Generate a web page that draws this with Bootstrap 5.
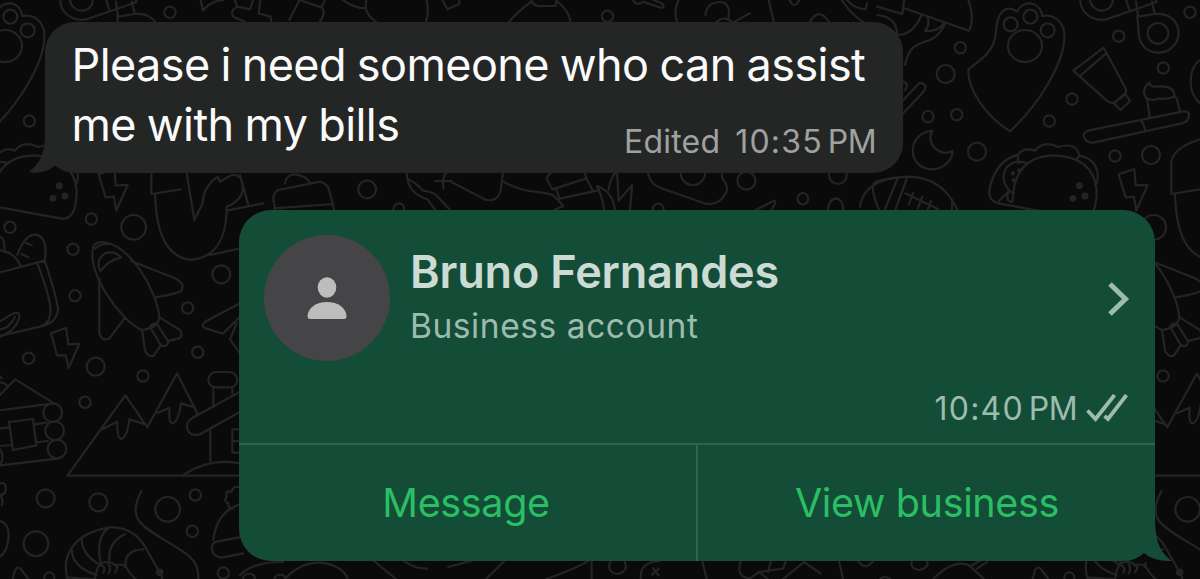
<!DOCTYPE html>
<html lang="en">
<head>
<meta charset="utf-8">
<meta name="viewport" content="width=device-width, initial-scale=1">
<title>Chat</title>
<link href="https://cdn.jsdelivr.net/npm/bootstrap@5.3.0/dist/css/bootstrap.min.css" rel="stylesheet">
<style>
  body { background: #0a0a0a; font-family: Inter, "Liberation Sans", sans-serif; }
  .chat { height: 579px; padding: 22px 45px 0; }
  .wallpaper { inset: 0; width: 100%; height: 100%; z-index: 0; }
  .wallpaper * { vector-effect: non-scaling-stroke; }
  .bubble { z-index: 1; }
  .bubble-in { width: 858px; height: 151px; border-radius: 30px; background: #242625; color: #fafafa; padding: 13px 26.500px 0; }
  .bubble-out { width: 916px; height: 351px; margin-top: 37px; background: #144d37; border-radius: 32px; }
  .tail-in { left: -16px; bottom: 0; }
  .tail-out { right: -17px; bottom: -1px; }
  .message-text { font-size: 45px; line-height: 60px; letter-spacing: -.58px; word-spacing: -1.200px; }
  .stamp { font-size: 32px; line-height: 40px; color: #a0a1a1; }
  .stamp-in { right: 27px; bottom: 11px; }
  .stamp-out { color: #9dbbae; height: 40px; padding-right: 27px; }
  .stamp-label { margin-right: 15px; letter-spacing: .2px; }
  .stamp-time { letter-spacing: 1.200px; }
  .stamp-half { margin-left: 5px; letter-spacing: -.6px; }
  .avatar { width: 126px; height: 126px; background: #454547; }
  .contact-row { padding: 25px 25px 0 25px; height: 179px; }
  .contact-info { padding: 10px 0 0 20px; }
  .contact-name { font-size: 45px; line-height: 54px; font-weight: 600; letter-spacing: -.17px; color: #ccdcd5; }
  .contact-kind { font-size: 33.5px; line-height: 44px; letter-spacing: .57px; margin-top: 5px; color: #9dbbae; }
  .chevron { margin-top: 46px; }
  .ticks { margin-left: 9px; }
  .actions { height: 118px; border-top: 2px solid #2f6350; }
  .action { border: 0; border-radius: 0; color: #2abf65; font-size: 39.5px; line-height: 50px; letter-spacing: -.35px; padding: 0 0 1px; }
  .action:hover { color: #2abf65; }
  .action-message { width: 457px; padding-right: 3px; }
  .action-view { border-left: 2px solid #2f6350; padding-left: 1px; }
</style>
</head>
<body>
<main class="chat position-relative overflow-hidden d-flex flex-column">
  <svg class="wallpaper position-absolute" viewBox="0 0 1200 579" fill="none" stroke="#242424" stroke-width="2.200" stroke-linejoin="round" stroke-linecap="round" aria-hidden="true">
    <defs>
      <g id="snacks" transform="translate(880 0) scale(.33333)">
        <!-- paw mitten -->
        <path d="M265 208C310 175 345 150 348 95C350 40 375 10 412 35C425 0 480 0 487 48C535 40 556 80 553 115C550 190 480 310 390 394C320 350 262 270 265 208Z"/>
        <circle cx="392" cy="73" r="21"/><circle cx="451" cy="50" r="21"/><circle cx="503" cy="91" r="21"/>
        <ellipse cx="435" cy="138" rx="51" ry="48"/>
        <!-- tube -->
        <path d="M580 212L671 143L738 268Q740 280 725 292L702 308Q688 310 680 302ZM602 226L681 158M702 310L735 281L750 303L721 330Z"/>
        <!-- toothbrush -->
        <path d="M628 391L910 334Q929 333 927 348Q925 365 905 370L640 428Q618 430 611 408Q610 396 628 391ZM783 362Q795 375 795 396M809 352L802 300Q780 270 808 248Q810 262 828 260C870 255 885 270 883 290L890 295L900 335M802 295Q820 305 832 295Q855 300 883 290"/>
        <!-- taco -->
        <path d="M398 604Q400 470 520 466Q640 470 650 570Q650 630 630 648Q620 658 600 655L355 610Q320 600 330 560Q350 480 415 464Q430 440 465 452Q490 420 535 441Q590 425 598 467Q645 475 653 520Q655 545 645 555M415 464Q412 480 416 489M598 467Q590 480 585 478M442 489Q400 475 378 505Q360 540 388 572L356 604M386 572L402 580M386 572Q375 610 398 604"/>
        <circle cx="598" cy="557" r="7" fill="#242424"/><circle cx="579" cy="595" r="7" fill="#242424"/><circle cx="615" cy="588" r="7" fill="#242424"/>
        <circle cx="399" cy="520" r="3"/><circle cx="418" cy="511" r="3"/><circle cx="401" cy="540" r="3"/>
        <!-- moon -->
        <path d="M157 392C80 400 80 500 150 508C190 510 218 480 218 453C180 475 135 430 157 392Z"/>
        <!-- bolt -->
        <path d="M716 523L763 507L767 556L803 555L769 632L762 590L737 592Z"/>
        <!-- cable link -->
        <path d="M601 0C600 40 640 65 680 58L830 6L822 -10M739 0L747 27M816 5L824 42M768 5L774 50L824 42C870 38 896 65 896 100C894 135 865 160 832 158C795 155 778 130 776 100L772 50"/>
        <path d="M630 0C635 40 695 45 699 0"/><circle cx="834" cy="100" r="31"/>
        <!-- umbrella -->
        <path d="M-8 20L67 42L73 -4M73 25L267 92Q285 60 265 0M-8 45Q50 50 52 105Q100 105 124 45M143 52Q150 75 135 93Q175 95 191 70M195 70C170 130 130 120 112 135Q85 145 75 195M68 245Q90 250 75 270M70 300L115 252Q125 245 135 255Q139 265 130 276L60 350"/>
        <!-- ball -->
        <path d="M-60 620C-50 550 20 530 90 530C180 535 225 590 250 680M52 537L10 640M80 537L42 640M76 580L175 628M100 578L86 614M127 590L113 626M153 603L140 638M217 600L215 640"/>
        <!-- plant pot -->
        <path d="M960 418Q875 445 874 490V582L962 568M885 585C890 720 930 770 990 780C1050 775 1100 740 1100 620Q1150 600 1148 560Q1145 520 1115 525L1080 545L1073 530Q1030 560 1028 610L1003 660L980 520M1100 632L1210 610M1050 765L1210 730M1140 525L1165 615"/>
        <path d="M960 180Q932 200 932 245Q932 285 960 310"/>
        <g><circle cx="241" cy="143" r="17"/><circle cx="197" cy="222" r="27"/><circle cx="144" cy="350" r="17"/><circle cx="230" cy="344" r="17"/><circle cx="291" cy="455" r="27"/><circle cx="576" cy="297" r="17"/><circle cx="508" cy="363" r="17"/><circle cx="716" cy="109" r="17"/><circle cx="930" cy="37" r="17"/><circle cx="850" cy="204" r="17"/><circle cx="705" cy="468" r="17"/><circle cx="813" cy="465" r="27"/></g>
      </g>
      <g id="rocket" transform="translate(0 170) scale(.33333)">
        <path d="M280 230Q285 215 310 216C390 225 470 360 478 440Q475 475 425 480C360 450 260 310 280 230ZM301 304Q285 270 315 250Q345 240 363 263Q325 270 301 304ZM285 236Q300 220 325 222M392 272L525 325Q555 340 545 360Q540 370 466 382M298 325V490Q305 515 328 505L375 443M426 480L435 540Q440 560 460 558L480 530M480 443L540 480Q550 495 538 505L508 512M450 470L482 525Q500 535 505 515L470 460Q455 460 450 470"/>
        <path d="M0 200Q15 205 13 245Q45 250 62 288M0 240Q15 245 13 245M52 255Q75 190 110 194Q145 205 134 272L-10 310M78 219L95 226M65 252L85 262M113 283Q150 380 152 420Q150 460 125 467M134 272Q170 380 174 418Q170 460 120 470L-10 500M-10 460L40 430Q60 425 58 440Q50 480 0 500M-10 480Q25 480 45 440"/>
        <path d="M153 490L198 473L205 523L238 521L206 594L197 556L171 556Z"/>
        <path d="M720 400L615 455Q600 470 618 475L668 491L720 440M710 460L690 508L720 550"/>
        <circle cx="30" cy="172" r="17"/><circle cx="274" cy="147" r="17"/><circle cx="401" cy="172" r="37"/><circle cx="219" cy="238" r="17"/><circle cx="225" cy="377" r="17"/><circle cx="664" cy="313" r="27"/><circle cx="563" cy="414" r="17"/><circle cx="593" cy="547" r="17"/><circle cx="86" cy="565" r="17"/><circle cx="287" cy="590" r="27"/><circle cx="429" cy="618" r="17"/>
      </g>
      <g id="mountains" transform="translate(0 370) scale(.33333)">
        <path d="M-10 85L46 28L162 100L-10 122M-5 38Q15 35 22 50M-5 15L5 25M0 175L28 172M0 228L35 225M105 163L138 158M109 217L143 213M0 286L172 266M27 156L99 147L109 226L39 240Z"/>
        <circle cx="158" cy="128" r="28"/><circle cx="164" cy="182" r="28"/><circle cx="171" cy="237" r="28"/><path d="M0 238Q15 260 0 286"/>
        <path d="M730 317H202L376 76L442 172L531 10L594 134M306 178L352 155Q350 205 364 207Q382 200 388 148L438 163M472 129L509 113Q505 160 518 160Q535 155 543 100L585 112"/>
        <path d="M648 6H688Q710 8 712 30Q710 52 688 52H648Q626 50 625 30Q626 8 648 6ZM640 54V104M697 54V72M730 60L575 145Q555 160 563 180Q572 200 600 193L730 120M631 180V274M548 316Q630 260 730 282M730 178H697V248H730M697 213H730"/>
        <path d="M424 363Q395 420 415 450C450 500 575 540 590 590Q597 610 594 640"/>
        <path d="M207 640C180 570 210 490 330 472Q400 470 435 530L475 600M375 493Q325 515 328 570M328 472Q285 500 302 580M246 502Q240 550 302 586M216 540Q215 590 290 615M430 538Q375 540 376 585Q385 610 420 640M200 622L285 628Q290 590 302 580Q330 570 345 585Q370 580 376 592M306 586Q318 595 310 608M325 582Q335 595 326 610M342 585Q360 590 345 607"/>
        <circle cx="479" cy="607" r="8" fill="#242424"/><path d="M484 615L490 640"/>
        <path d="M730 400Q650 420 640 510M650 515L730 500M730 550L665 563Q640 560 636 540Q635 515 650 515M700 415Q685 420 685 400Q670 395 680 380Q675 360 695 365Q700 345 720 352"/>
        <path d="M0 340Q20 335 17 360Q15 375 0 375Q12 390 5 405M0 453Q30 460 25 510Q20 545 0 560M35 640L45 600Q55 585 65 600L95 640"/>
        <circle cx="255" cy="97" r="17"/><circle cx="137" cy="385" r="27"/><circle cx="295" cy="397" r="27"/><circle cx="503" cy="418" r="37"/><circle cx="586" cy="375" r="17"/><circle cx="577" cy="484" r="17"/><circle cx="108" cy="521" r="37"/><circle cx="670" cy="609" r="17"/><circle cx="148" cy="622" r="15"/>
      </g>
    </defs>
    <use href="#snacks"/><use href="#snacks" x="-1020"/>
    <use href="#rocket"/><use href="#rocket" x="1020"/>
    <use href="#mountains"/><use href="#mountains" x="1020"/>
    <!-- doodles along the top edge -->
    <g transform="translate(120 0) scale(.51 .33333)">
      <path d="M158 0L163 32Q175 5 202 0M225 0L230 20Q215 30 222 50L245 65M230 20L255 28L262 -5M275 0L272 40L295 50L297 65M352 0L332 60M352 0L395 22L402 0M395 22Q405 35 392 65M437 0Q460 25 482 25M484 -5Q475 40 502 65M600 -5Q607 30 600 65M632 0L642 28L665 12L666 -5M806 0Q812 22 830 18L854 18L856 0M806 5Q780 35 763 65M858 5Q882 35 883 65M1005 0Q1015 20 1025 5L1062 24Q1070 20 1062 10L1040 -5M1095 0Q1085 35 1092 65M1148 45Q1150 5 1180 6Q1200 15 1192 60M1170 65Q1185 45 1200 65M1205 65L1235 40M1272 0L1282 65M1313 0Q1322 30 1332 0M1353 65Q1370 20 1390 65M1415 0Q1440 60 1480 85M1425 0Q1440 25 1462 28L1465 10"/>
      <ellipse cx="956" cy="49" rx="11" ry="17"/>
    </g>
    <!-- doodles between the two messages -->
    <g transform="scale(.33333)">
      <path d="M855 550Q860 520 890 524Q920 530 930 548M835 570L960 545Q985 550 990 580L1005 640M835 570Q815 580 822 610L830 640M822 625L1000 612"/>
    </g>
    <g transform="translate(340 160) scale(.35714 .33333)">
      <ellipse cx="76" cy="88" rx="25" ry="27"/><ellipse cx="1138" cy="62" rx="25" ry="27"/><ellipse cx="1296" cy="116" rx="15" ry="17"/><ellipse cx="1394" cy="45" rx="25" ry="27"/><ellipse cx="988" cy="40" rx="34" ry="35"/><ellipse cx="165" cy="147" rx="15" ry="17"/><ellipse cx="891" cy="148" rx="15" ry="17"/>
      <path d="M187 40Q188 100 245 118L268 152M190 58Q215 70 232 92Q265 95 278 115L310 152M266 63H312M297 40Q285 55 290 86M312 66L405 118Q440 130 450 90L456 40M458 65C520 105 570 90 600 108L625 138L600 150M590 40Q575 50 580 60L595 88L690 55L686 40M605 88L615 116L720 92M690 55L708 92M740 152Q735 110 720 78Q765 95 770 152M752 90Q755 60 770 40M776 40L780 122L818 75L812 152M862 40Q870 75 900 85L1020 130Q1060 140 1080 100Q1090 80 1070 55V40M1160 152L1216 122Q1225 125 1206 152M1365 152Q1370 115 1390 115Q1410 120 1409 152M1510 152Q1480 75 1500 65Q1520 58 1568 52"/>
    </g>
    <!-- doodles below the contact card -->
    <g transform="translate(240 552) scale(.6 .33333)">
      <path d="M0 70Q20 30 72 30M75 81Q100 30 135 32Q170 40 180 81M222 25L260 81M272 25Q290 50 312 50M347 45L388 25M442 25L410 81M510 81Q560 50 582 25M586 25V81M618 25Q610 60 628 66Q650 60 640 25M668 81Q665 30 700 27M688 48L698 70M698 50L687 68M770 25L778 81M835 25Q825 75 850 79L865 60L905 50L910 25M865 60L880 81M880 60L885 25M905 81L940 30L968 65M998 25L1005 81M1030 25Q1042 60 1056 25M1120 25Q1115 50 1133 54Q1150 45 1145 25M1155 81Q1190 20 1215 40L1240 81M1220 40L1235 25M1228 50L1245 30"/>
      <ellipse cx="15" cy="80" rx="10" ry="15"/><ellipse cx="67" cy="83" rx="10" ry="15"/><ellipse cx="1075" cy="90" rx="10" ry="15"/>
    </g>
  </svg>

  <section class="bubble bubble-in position-relative">
    <svg class="tail-in position-absolute" width="50" height="40" viewBox="0 0 50 40" aria-hidden="true"><path fill="#242625" d="M16 0C16 18 12 30 0 39Q15 42 27 32L50 40V0Z"/></svg>
    <p class="message-text position-relative text-nowrap mb-0">Please i need someone who can assist<br>me with my bills</p>
    <div class="stamp stamp-in position-absolute d-flex"><span class="stamp-label">Edited</span><span class="stamp-time">10:35</span><span class="stamp-half">PM</span></div>
  </section>

  <section class="bubble bubble-out position-relative align-self-end d-flex flex-column flex-shrink-0">
    <svg class="tail-out position-absolute" width="60" height="50" viewBox="0 0 60 50" aria-hidden="true"><path fill="#0a0a0a" d="M20 50L32 41L44 50Z"/><path fill="#144d37" d="M43 0C43 25 45 38 60 49Q43 50 32 41Q24 48 12 49V0Z"/></svg>
    <div class="contact-row d-flex align-items-start">
      <div class="avatar rounded-circle d-flex align-items-center justify-content-center flex-shrink-0">
        <svg width="40" height="42" viewBox="0 0 40 42" fill="#bdbdbe" aria-hidden="true"><ellipse cx="20" cy="10.500" rx="9.300" ry="10.200"/><path d="M3 42Q.5 42 .5 39C1 31 9 25 20 25S39 31 39.500 39Q39.500 42 37 42Z"/></svg>
      </div>
      <div class="contact-info flex-grow-1">
        <div class="contact-name">Bruno Fernandes</div>
        <div class="contact-kind">Business account</div>
      </div>
      <svg class="chevron flex-shrink-0" width="24" height="36" viewBox="0 0 24 36" fill="none" stroke="#9dbbae" stroke-width="5" aria-hidden="true"><path d="M4 3L19.500 18L4 33"/></svg>
    </div>
    <div class="stamp stamp-out d-flex justify-content-end align-items-center">
      <span class="stamp-time">10:40</span><span class="stamp-half">PM</span>
      <svg class="ticks" width="42" height="30" viewBox="0 0 42 30" fill="none" stroke="#9dbbae" stroke-width="3.800" aria-hidden="true"><path d="M1.500 16.500L9.500 25L28.500 1M18.500 22L22 25L40.500 1"/></svg>
    </div>
    <div class="actions d-flex mt-auto">
      <button type="button" class="action action-message btn flex-shrink-0">Message</button>
      <button type="button" class="action action-view btn flex-fill">View business</button>
    </div>
  </section>
</main>
<script src="https://cdn.jsdelivr.net/npm/bootstrap@5.3.0/dist/js/bootstrap.bundle.min.js"></script>
</body>
</html>
